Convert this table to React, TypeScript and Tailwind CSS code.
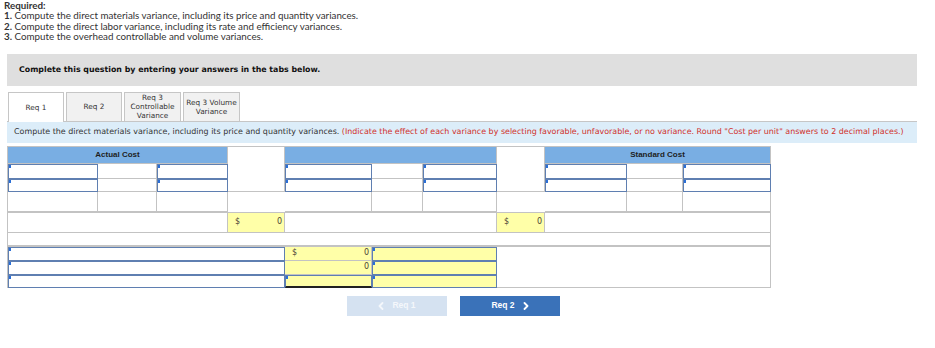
import React from "react";

const grid = "border-[#c3c3c3]";

function Marker() {
  return <span className="absolute left-0 top-0 w-[2px] h-[3px] bg-[#2b6fd6]" />;
}

function Input({ cls, yellow }: { cls: string; yellow?: boolean }) {
  return (
    <div
      className={`relative border border-[#5f7fb1] ${yellow ? "bg-[#ffffa8]" : "bg-white"} ${cls}`}
    >
      <Marker />
    </div>
  );
}

function Plain({ cls, children }: { cls: string; children?: React.ReactNode }) {
  return <div className={`bg-white border-r border-b ${grid} ${cls}`}>{children}</div>;
}

function Head({ cls, label }: { cls: string; label?: string }) {
  return (
    <div
      className={`bg-[#79aee3] border-r border-b ${grid} flex items-center justify-center text-[8px] font-bold text-[#1e1e1e] ${cls}`}
      style={{ fontFamily: '"Liberation Sans", Arial, sans-serif' }}
    >
      {label}
    </div>
  );
}

function Money({ cls, dollar }: { cls: string; dollar?: boolean }) {
  return (
    <div
      className={`bg-[#ffffa8] border-r border-b ${grid} flex items-center justify-between pl-[7px] pr-[2px] text-[8px] text-[#4a4436] ${cls}`}
      style={{ fontFamily: '"DejaVu Sans", Verdana, sans-serif' }}
    >
      <span>{dollar ? "$" : ""}</span>
      <span>0</span>
    </div>
  );
}

function Chevron({ dir }: { dir: "left" | "right" }) {
  return (
    <svg width="6" height="8" viewBox="0 0 6 8" fill="none">
      <path
        d={dir === "left" ? "M4.5 1 L1.5 4 L4.5 7" : "M1.5 1 L4.5 4 L1.5 7"}
        stroke="currentColor"
        strokeWidth="1.8"
        strokeLinecap="round"
        strokeLinejoin="round"
      />
    </svg>
  );
}

export default function App() {
  const body = { fontFamily: 'Lato, "Open Sans", sans-serif' };
  const verdana = { fontFamily: '"DejaVu Sans", Verdana, sans-serif' };

  return (
    <div className="w-[935px] h-[348px] bg-white overflow-hidden">
      <div className="pl-[4px] text-[9.8px] leading-[10.4px] text-[#333]" style={body}>
        <div className="font-bold">Required:</div>
        <div>
          <b>1.</b> Compute the direct materials variance, including its price and quantity variances.
        </div>
        <div>
          <b>2.</b> Compute the direct labor variance, including its rate and efficiency variances.
        </div>
        <div>
          <b>3.</b> Compute the overhead controllable and volume variances.
        </div>
      </div>

      <div className="ml-[7px] w-[910px] mt-[12px]">
        <div
          className="h-[32px] bg-[#dfdfdf] flex items-center pl-[12px] text-[7.87px] font-bold text-[#111]"
          style={verdana}
        >
          Complete this question by entering your answers in the tabs below.
        </div>

        {/* tabs */}
        <div className="flex items-end mt-[6px] pl-[1px] gap-[2px] text-[7.3px] text-[#333] leading-[9px]" style={verdana}>
          <div className="w-[56px] h-[30px] bg-white border border-b-0 border-[#c6c6c6] flex items-center justify-center -mb-[1px] relative z-10">
            Req 1
          </div>
          <div className="w-[56px] h-[29px] bg-[#f1f1f1] border border-b-0 border-[#c6c6c6] flex items-center justify-center">
            Req 2
          </div>
          <div className="w-[57px] h-[29px] bg-[#f1f1f1] border border-b-0 border-[#c6c6c6] flex items-center justify-center text-center">
            Req 3<br />Controllable<br />Variance
          </div>
          <div className="w-[57px] h-[29px] bg-[#f1f1f1] border border-b-0 border-[#c6c6c6] flex items-center justify-center text-center">
            Req 3 Volume<br />Variance
          </div>
        </div>

        <div
          className="h-[22px] bg-[#dcedf9] border-t border-[#c6c6c6] flex items-center pl-[7px] text-[7.95px] text-[#333] whitespace-nowrap"
          style={verdana}
        >
          Compute the direct materials variance, including its price and quantity variances.&nbsp;
          <span className="text-[#d0302a]">
            (Indicate the effect of each variance by selecting favorable, unfavorable, or no variance. Round "Cost per unit" answers to 2 decimal places.)
          </span>
        </div>

        {/* worksheet */}
        <div
          className={`mt-[3px] w-[764px] grid grid-cols-[90px_59px_71px_57px_87px_51px_74px_48px_82px_56px_88px] grid-rows-[17px_15px_13px_20px_21px_14px_14px_14px_13px] border-t border-l ${grid}`}
        >
          <Head cls="row-start-1 col-start-1 col-span-3" label="Actual Cost" />
          <Plain cls="row-start-1 col-start-4 row-span-3" />
          <Head cls="row-start-1 col-start-5 col-span-3" />
          <Plain cls="row-start-1 col-start-8 row-span-3" />
          <Head cls="row-start-1 col-start-9 col-span-3" label="Standard Cost" />

          {/* rows 1-2 */}
          {["row-start-2", "row-start-3"].map((r) => (
            <React.Fragment key={r}>
              <Input cls={`${r} col-start-1`} />
              <Plain cls={`${r} col-start-2`} />
              <Input cls={`${r} col-start-3`} />
              <Input cls={`${r} col-start-5`} />
              <Plain cls={`${r} col-start-6`} />
              <Input cls={`${r} col-start-7`} />
              <Input cls={`${r} col-start-9`} />
              <Plain cls={`${r} col-start-10`} />
              <Input cls={`${r} col-start-11`} />
            </React.Fragment>
          ))}

          {/* row 3 */}
          <Plain cls="row-start-4 col-start-1" />
          <Plain cls="row-start-4 col-start-2" />
          <Plain cls="row-start-4 col-start-3" />
          <Plain cls="row-start-4 col-start-5" />
          <Plain cls="row-start-4 col-start-6" />
          <Plain cls="row-start-4 col-start-7" />
          <Plain cls="row-start-4 col-start-9" />
          <Plain cls="row-start-4 col-start-10" />
          <Plain cls="row-start-4 col-start-11" />

          {/* totals */}
          <Plain cls="row-start-5 col-start-1 col-span-3 border-t" />
          <Money cls="row-start-5 col-start-4 border-t" dollar />
          <Plain cls="row-start-5 col-start-5 col-span-3 border-t" />
          <Money cls="row-start-5 col-start-8 border-t" dollar />
          <Plain cls="row-start-5 col-start-9 col-span-3 border-t" />

          {/* spacer row */}
          <Plain cls="row-start-6 col-start-1 col-span-11 border-b-2" />

          {/* variance rows */}
          <Input cls="row-start-7 col-start-1 col-span-4" />
          <Money cls="row-start-7 col-start-5" dollar />
          <Input cls="row-start-7 col-start-6 col-span-2" yellow />

          <Input cls="row-start-8 col-start-1 col-span-4" />
          <Money cls="row-start-8 col-start-5" />
          <Input cls="row-start-8 col-start-6 col-span-2" yellow />

          <Input cls="row-start-9 col-start-1 col-span-4" />
          <div className="row-start-9 col-start-5 relative bg-[#ffffa8] border border-[#5f7fb1] border-b-2 border-b-[#222]">
            <Marker />
          </div>
          <Input cls="row-start-9 col-start-6 col-span-2" yellow />

          <Plain cls="row-start-7 col-start-8 col-span-4 row-span-3" />
        </div>

        {/* navigation */}
        <div
          className="flex gap-[13px] mt-[8px] ml-[340px] text-[8.5px] font-bold"
          style={{ fontFamily: '"Liberation Sans", Arial, sans-serif' }}
        >
          <div className="w-[100px] h-[20px] bg-[#d5e2f1] text-[#f4f7fb] flex items-center justify-center gap-[8px]">
            <Chevron dir="left" />
            <span>Req 1</span>
          </div>
          <div className="w-[100px] h-[20px] bg-[#3a72b9] text-white flex items-center justify-center gap-[8px]">
            <span>Req 2</span>
            <Chevron dir="right" />
          </div>
        </div>
      </div>
    </div>
  );
}
